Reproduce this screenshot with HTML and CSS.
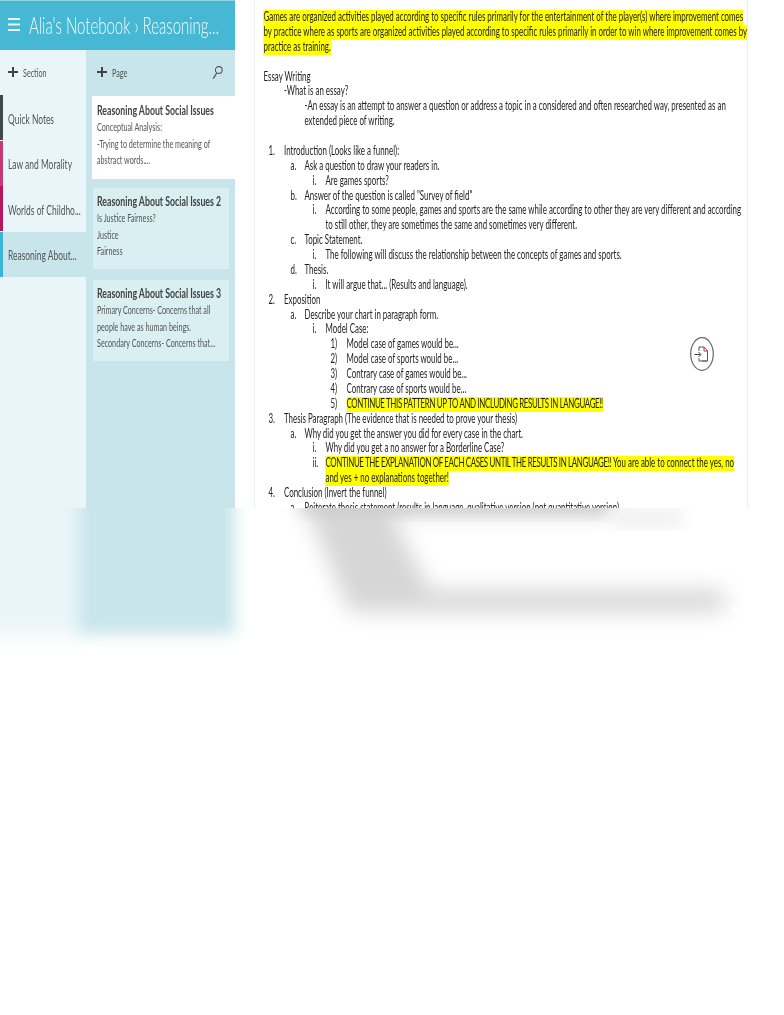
FILE: index.html
```html
<!DOCTYPE html>
<html lang="en">
<head>
<meta charset="utf-8">
<title>Alia's Notebook</title>
<link rel="stylesheet" href="styles.css">
</head>
<body>
<main class="shot">
  <div class="app">
    <aside class="sidebar">
      <header class="topbar">
        <svg class="burger" width="12" height="15" viewBox="0 0 12 15"><path d="M0 2h12M0 7.500h12M0 13h12" stroke="#e8f6fa" stroke-width="2"/></svg>
        <span class="crumb sq">Alia's Notebook › Reasoning...</span>
      </header>
      <div class="columns">
        <nav class="sections">
          <div class="add"><span class="plus"></span><span class="add-label sq">Section</span></div>
          <div class="section s-dark"><span class="sq">Quick Notes</span></div>
          <div class="section s-pink-dot"><span class="sq">Law and Morality</span></div>
          <div class="section s-pink"><span class="sq">Worlds of Childho...</span></div>
          <div class="section s-blue"><span class="sq">Reasoning About...</span></div>
        </nav>
        <section class="pages">
          <div class="add add-page"><span class="plus"></span><span class="add-label sq">Page</span>
            <svg class="search" width="11" height="15" viewBox="0 0 11 15"><circle cx="6.800" cy="5" r="3.400" fill="none" stroke="#555" stroke-width="1.100"/><path d="M4.800 8 1.200 13.600" stroke="#555" stroke-width="1.300"/></svg>
          </div>
          <article class="card card-on">
            <h3 class="sq">Reasoning About Social Issues</h3>
            <p class="sq">Conceptual Analysis:</p><p class="sq">-Trying to determine the meaning of</p><p class="sq">abstract words....</p>
          </article>
          <article class="card">
            <h3 class="sq">Reasoning About Social Issues 2</h3>
            <p class="sq">Is Justice Fairness?</p><p class="sq">Justice</p><p class="sq">Fairness</p>
          </article>
          <article class="card">
            <h3 class="sq">Reasoning About Social Issues 3</h3>
            <p class="sq">Primary Concerns- Concerns that all</p><p class="sq">people have as human beings.</p><p class="sq">Secondary Concerns- Concerns that...</p>
          </article>
        </section>
      </div>
    </aside>
    <article class="doc">
      <div class="sheet">
      <div class="line"><mark>Games are organized activities played according to specific rules primarily for the entertainment of the player(s) where improvement comes</mark></div>
      <div class="line"><mark>by practice where as sports are organized activities played according to specific rules primarily in order to win where improvement comes by</mark></div>
      <div class="line"><mark>practice as training.</mark></div>
      <div class="line"></div>
      <div class="line">Essay Writing</div>
      <div class="line in1">-What is an essay?</div>
      <div class="line in2">-An essay is an attempt to answer a question or address a topic in a considered and often researched way, presented as an</div>
      <div class="line in2">extended piece of writing.</div>
      <div class="line"></div>
      <div class="line l1"><b>1.</b>Introduction (Looks like a funnel):</div>
      <div class="line l2"><b>a.</b>Ask a question to draw your readers in.</div>
      <div class="line l3"><b>i.</b>Are games sports?</div>
      <div class="line l2"><b>b.</b>Answer of the question is called "Survey of field"</div>
      <div class="line l3"><b>i.</b>According to some people, games and sports are the same while according to other they are very different and according</div>
      <div class="line l3"><b></b>to still other, they are sometimes the same and sometimes very different.</div>
      <div class="line l2"><b>c.</b>Topic Statement.</div>
      <div class="line l3"><b>i.</b>The following will discuss the relationship between the concepts of games and sports.</div>
      <div class="line l2"><b>d.</b>Thesis.</div>
      <div class="line l3"><b>i.</b>It will argue that... (Results and language).</div>
      <div class="line l1"><b>2.</b>Exposition</div>
      <div class="line l2"><b>a.</b>Describe your chart in paragraph form.</div>
      <div class="line l3"><b>i.</b>Model Case:</div>
      <div class="line l4"><b>1)</b>Model case of games would be...</div>
      <div class="line l4"><b>2)</b>Model case of sports would be...</div>
      <div class="line l4"><b>3)</b>Contrary case of games would be...</div>
      <div class="line l4"><b>4)</b>Contrary case of sports would be...</div>
      <div class="line l4"><b>5)</b><mark><span class="caps">CONTINUE THIS PATTERN UP TO AND INCLUDING RESULTS IN LANGUAGE!!</span></mark></div>
      <div class="line l1"><b>3.</b>Thesis Paragraph (The evidence that is needed to prove your thesis)</div>
      <div class="line l2"><b>a.</b>Why did you get the answer you did for every case in the chart.</div>
      <div class="line l3"><b>i.</b>Why did you get a no answer for a Borderline Case?</div>
      <div class="line l3"><b>ii.</b><mark><span class="caps">CONTINUE THE EXPLANATION OF EACH CASES UNTIL THE RESULTS IN LANGUAGE!!</span> You are able to connect the yes, no</mark></div>
      <div class="line l3"><b></b><mark>and yes + no explanations together!</mark></div>
      <div class="line l1"><b>4.</b>Conclusion (Invert the funnel)</div>
      <div class="line l2"><b>a.</b>Reiterate thesis statement (results in language, qualitative version (not quantitative version)</div>
      </div>
      <div class="badge">
        <svg width="24" height="34" viewBox="0 0 24 34">
          <ellipse cx="12" cy="17" rx="11.300" ry="16.300" fill="#fff" stroke="#666" stroke-width="1.200"/>
          <path d="M9 14V10h5l3.500 4v10H9v-3" fill="none" stroke="#555" stroke-width="1"/>
          <path d="M14 10v4h3.500M12 24h5" fill="none" stroke="#b23a5a" stroke-width="1"/>
          <path d="M4.500 17.500h6M8.500 15l2.500 2.500L8.500 20" fill="none" stroke="#444" stroke-width="1"/>
        </svg>
      </div>
    </article>
  </div>
  <svg class="fade" width="784" height="507" viewBox="0 508 784 507" aria-hidden="true">
    <defs>
      <filter id="b8" x="-30%" y="-30%" width="160%" height="160%"><feGaussianBlur stdDeviation="11"/></filter>
      <filter id="b6" x="-30%" y="-30%" width="160%" height="160%"><feGaussianBlur stdDeviation="8"/></filter>
    </defs>
    <rect x="-40" y="440" width="130" height="194" fill="#e9f5f8" filter="url(#b8)"/>
    <rect x="78" y="440" width="157" height="194" fill="#c8e5ec" filter="url(#b6)"/>
    <path d="M294 480H612V514H390L430 590H724V612H350Z" fill="#d6d6d6" filter="url(#b8)"/>
    <path d="M300 490H610V514H300Z" fill="#c4c8c8" opacity=".6" filter="url(#b6)"/>
    <path d="M612 510H682V526H612Z" fill="#eeeeee" filter="url(#b6)"/>
  </svg>
</main>
</body>
</html>
```
FILE: styles.css
```css
* { box-sizing: border-box; }
html, body { margin: 0; padding: 0; background: #fff; }
.shot { --sx: .625; width: 784px; height: 1015px; overflow: hidden; display: flex; flex-direction: column; font-family: Lato, "Liberation Sans", sans-serif; color: #333; }
.app { height: 508px; flex: none; display: flex; overflow: hidden; }
.fade { display: block; flex: none; }
.sq { display: block; width: max-content; transform: scaleX(var(--sx)); transform-origin: 0 50%; white-space: nowrap; }
.sidebar { width: 235px; flex: none; display: flex; flex-direction: column; }
.topbar { height: 50px; background: #47b8d4; border-top: 1px solid #8fd3e4; display: flex; align-items: center; padding: 0 0 2px 8px; color: #f2fafc; }
.burger { flex: none; margin-right: 9px; }
.crumb { font-size: 24px; font-weight: 300; }
.columns { flex: 1; display: flex; min-height: 0; }
.sections { width: 86px; background: #e9f5f8; flex: none; }
.pages { width: 149px; flex: none; background: #c8e5ec; }
.add { height: 45px; display: flex; align-items: center; padding: 0 0 1px 8px; font-size: 11.500px; color: #555; }
.add-page { padding-left: 11px; padding-right: 12px; margin-bottom: 1px; }
.plus { width: 10px; height: 10px; margin-right: 5px; flex: none; background: linear-gradient(#444,#444) center/100% 2px no-repeat, linear-gradient(#444,#444) center/2px 100% no-repeat; }
.search { margin-left: auto; }
.section { height: 45px; display: flex; align-items: center; font-size: 13.500px; color: #555; border-left: 3px solid transparent; padding: 2px 0 0 5px; margin-bottom: .67px; }
.s-dark { border-left-color: #3f4a4c; }
.s-pink-dot { border-left-color: #c63a74; }
.s-pink { border-left-color: #b5165c; }
.s-blue { border-left-color: #3bb5d5; background: #c8e5ec; }
.card { margin: 0 6px 11px 7px; padding: 4px 4px 0; height: 81px; background: #d9eff2; }
.card-on { margin: 0 0 9px 6px; padding-left: 5px; height: 83px; background: #fff; padding-top: 5px; }
.card h3 { margin: 0 0 1px; font-size: 14px; line-height: 17px; color: #444; font-weight: bold; }
.card p { margin: 0; font-size: 11.500px; line-height: 16.500px; color: #555; }
.doc { --sx: .633; position: relative; margin-left: 19px; width: 494px; border-left: 1px solid #eee; border-right: 1px solid #eee; font-size: 12.500px; color: #1f1f1f; }
.sheet { width: calc(494px / var(--sx)); padding: 10px 0 0 calc(8.500px / var(--sx)); transform: scaleX(var(--sx)); transform-origin: 0 0; }
.line { height: 14.880px; line-height: 14.880px; white-space: nowrap; display: flex; }
.line b { font-weight: normal; display: block; flex: none; }
mark { background: #ff0; color: #1f1f1f; display: block; }
.caps { letter-spacing: -.55px; }
.in1 { padding-left: calc(20.500px / var(--sx)); }
.in2 { padding-left: calc(41px / var(--sx)); }
.l1 { padding-left: calc(5px / var(--sx)); }
.l1 b { width: calc(15.500px / var(--sx)); }
.l2 { padding-left: calc(27px / var(--sx)); }
.l2 b { width: calc(14px / var(--sx)); }
.l3 { padding-left: calc(49px / var(--sx)); }
.l3 b { width: calc(13px / var(--sx)); }
.l4 { padding-left: calc(67px / var(--sx)); }
.l4 b { width: calc(16px / var(--sx)); }
.badge { position: absolute; left: 435px; top: 337px; line-height: 0; }
```
